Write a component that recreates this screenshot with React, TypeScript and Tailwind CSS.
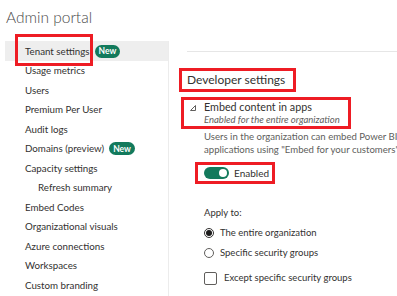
import React from "react";

const font = { fontFamily: 'Lato, "Noto Sans", sans-serif' };

const NewBadge = () => (
  <span className="ml-[5px] inline-flex h-[13px] items-center rounded-full bg-[#137a5c] px-[4px] text-[8.5px] font-bold leading-none text-white">
    New
  </span>
);

const SideItem = ({
  label,
  badge,
  indent,
}: {
  label: string;
  badge?: boolean;
  indent?: boolean;
}) => (
  <div
    className={`flex h-[19.5px] items-center whitespace-nowrap text-[9.75px] text-[#323130] ${
      indent ? "pl-[33px]" : "pl-[20px]"
    }`}
  >
    {label}
    {badge && <NewBadge />}
  </div>
);

const App = () => {
  return (
    <div
      className="flex h-[296px] w-[397px] flex-col overflow-hidden bg-white"
      style={font}
    >
      <div className="h-[41px] shrink-0 pl-[6px] pt-[6px] text-[15.5px] font-light text-[#4a4a4a]">
        Admin portal
      </div>
      <div className="flex flex-1">
        {/* sidebar */}
        <div className="ml-[5px] w-[164px] shrink-0 border-r border-[#ececec]">
          <div className="relative flex h-[20px] items-center bg-[#eeeeee] pl-[20px] text-[9.75px] text-[#323130]">
            <span className="relative whitespace-nowrap">
              Tenant settings
              <span className="absolute -left-[10px] -right-[3px] -top-[10px] -bottom-[8px] border-[3px] border-[#ee1c24]" />
            </span>
            <NewBadge />
          </div>
          <SideItem label="Usage metrics" />
          <SideItem label="Users" />
          <SideItem label="Premium Per User" />
          <SideItem label="Audit logs" />
          <SideItem label="Domains (preview)" badge />
          <SideItem label="Capacity settings" />
          <SideItem label="Refresh summary" indent />
          <SideItem label="Embed Codes" />
          <SideItem label="Organizational visuals" />
          <SideItem label="Azure connections" />
          <SideItem label="Workspaces" />
          <SideItem label="Custom branding" />
        </div>

        {/* content */}
        <div className="min-w-0 flex-1 overflow-hidden text-[#323130]">
          <div className="ml-[18px] mt-[10px] h-px bg-[#e6e6e6]" />
          <div className="ml-[10px] mt-[16px] flex h-[24px] w-[117px] items-center whitespace-nowrap border-[3px] border-[#ee1c24] pl-[5px] text-[12px]">
            Developer settings
          </div>
          <div className="ml-[12px] mt-[5px] flex h-[32px] w-[170px] border-[3px] border-[#ee1c24] pl-[5px]">
            <svg
              width="8"
              height="8"
              viewBox="0 0 8 8"
              className="mt-[4px] shrink-0"
            >
              <path
                d="M6.5 1.5 L6.5 6.5 L1.5 6.5 Z"
                fill="none"
                stroke="#605e5c"
                strokeWidth="1"
              />
            </svg>
            <div className="ml-[7px] flex flex-col whitespace-nowrap">
              <span className="text-[10.75px] leading-[13px]">
                Embed content in apps
              </span>
              <span className="text-[9.5px] italic leading-[13px] text-[#605e5c]">
                Enabled for the entire organization
              </span>
            </div>
          </div>
          <div className="ml-[35px] mt-[1px] whitespace-nowrap text-[9.6px] leading-[13px] text-[#605e5c]">
            <div>Users in the organization can embed Power BI dashboards</div>
            <div>applications using "Embed for your customers" method</div>
          </div>
          <div className="ml-[26px] mt-[6px] flex h-[22px] w-[80px] items-center border-[3px] border-[#ee1c24] pl-[6px]">
            <span className="flex h-[12px] w-[25px] items-center justify-end rounded-full bg-[#137a5c] pr-[2px]">
              <span className="h-[8px] w-[8px] rounded-full bg-white" />
            </span>
            <span className="ml-[5px] text-[10px]">Enabled</span>
          </div>
          <div className="ml-[35px] mt-[22px] text-[9.5px] leading-[13px]">
            Apply to:
          </div>
          <div className="ml-[35px] mt-[4px] flex h-[20px] items-center whitespace-nowrap text-[9.5px]">
            <span className="flex h-[10px] w-[10px] items-center justify-center rounded-full border border-[#323130]">
              <span className="h-[6px] w-[6px] rounded-full bg-[#1b1b1b]" />
            </span>
            <span className="ml-[6px]">The entire organization</span>
          </div>
          <div className="ml-[35px] flex h-[20px] items-center whitespace-nowrap text-[9.5px]">
            <span className="h-[10px] w-[10px] rounded-full border border-[#605e5c]" />
            <span className="ml-[6px]">Specific security groups</span>
          </div>
          <div className="ml-[35px] mt-[7px] flex h-[16px] items-center whitespace-nowrap text-[9.5px]">
            <span className="h-[13px] w-[13px] rounded-[2px] border border-[#605e5c]" />
            <span className="ml-[7px]">Except specific security groups</span>
          </div>
        </div>
      </div>
    </div>
  );
};

export default App;
